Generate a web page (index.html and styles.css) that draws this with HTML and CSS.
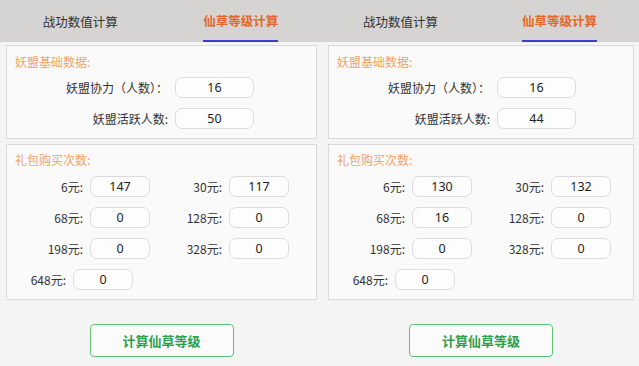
FILE: index.html
```html
<!DOCTYPE html>
<html lang="zh-CN">
<head>
  <meta charset="UTF-8">
  <meta name="viewport" content="width=device-width, initial-scale=1.0">
  <title>仙草等级计算</title>
  <link rel="stylesheet" href="styles.css">
</head>
<body>
  <div class="compare">
    <!-- first screen -->
    <div class="herb-screen">
      <div class="tab-bar">
        <div class="tab-bar__item"><span>战功数值计算</span></div>
        <div class="tab-bar__item tab-bar__item--active"><span>仙草等级计算</span></div>
      </div>
      <div class="calc-card">
        <div class="calc-card__title">妖盟基础数据:</div>
        <div class="field-row">
          <div class="field-row__label">妖盟协力（人数）：</div>
          <input class="field-input field-input--wide" type="text" value="16">
        </div>
        <div class="field-row">
          <div class="field-row__label">妖盟活跃人数:</div>
          <input class="field-input field-input--wide" type="text" value="50">
        </div>
      </div>
      <div class="calc-card calc-card--gifts">
        <div class="calc-card__title">礼包购买次数:</div>
        <div class="gift-row">
          <div class="gift-item"><div class="gift-item__label">6元:</div><input class="field-input" type="text" value="147"></div>
          <div class="gift-item"><div class="gift-item__label">30元:</div><input class="field-input" type="text" value="117"></div>
        </div>
        <div class="gift-row">
          <div class="gift-item"><div class="gift-item__label">68元:</div><input class="field-input" type="text" value="0"></div>
          <div class="gift-item"><div class="gift-item__label">128元:</div><input class="field-input" type="text" value="0"></div>
        </div>
        <div class="gift-row">
          <div class="gift-item"><div class="gift-item__label">198元:</div><input class="field-input" type="text" value="0"></div>
          <div class="gift-item"><div class="gift-item__label">328元:</div><input class="field-input" type="text" value="0"></div>
        </div>
        <div class="gift-row">
          <div class="gift-item gift-item--last"><div class="gift-item__label">648元:</div><input class="field-input" type="text" value="0"></div>
        </div>
      </div>
      <div class="calc-actions">
        <button class="calc-button">计算仙草等级</button>
      </div>
    </div>

    <!-- second screen -->
    <div class="herb-screen herb-screen--second">
      <div class="tab-bar">
        <div class="tab-bar__item"><span>战功数值计算</span></div>
        <div class="tab-bar__item tab-bar__item--active"><span>仙草等级计算</span></div>
      </div>
      <div class="calc-card">
        <div class="calc-card__title">妖盟基础数据:</div>
        <div class="field-row">
          <div class="field-row__label">妖盟协力（人数）：</div>
          <input class="field-input field-input--wide" type="text" value="16">
        </div>
        <div class="field-row">
          <div class="field-row__label">妖盟活跃人数:</div>
          <input class="field-input field-input--wide" type="text" value="44">
        </div>
      </div>
      <div class="calc-card calc-card--gifts">
        <div class="calc-card__title">礼包购买次数:</div>
        <div class="gift-row">
          <div class="gift-item"><div class="gift-item__label">6元:</div><input class="field-input" type="text" value="130"></div>
          <div class="gift-item"><div class="gift-item__label">30元:</div><input class="field-input" type="text" value="132"></div>
        </div>
        <div class="gift-row">
          <div class="gift-item"><div class="gift-item__label">68元:</div><input class="field-input" type="text" value="16"></div>
          <div class="gift-item"><div class="gift-item__label">128元:</div><input class="field-input" type="text" value="0"></div>
        </div>
        <div class="gift-row">
          <div class="gift-item"><div class="gift-item__label">198元:</div><input class="field-input" type="text" value="0"></div>
          <div class="gift-item"><div class="gift-item__label">328元:</div><input class="field-input" type="text" value="0"></div>
        </div>
        <div class="gift-row">
          <div class="gift-item gift-item--last"><div class="gift-item__label">648元:</div><input class="field-input" type="text" value="0"></div>
        </div>
      </div>
      <div class="calc-actions">
        <button class="calc-button">计算仙草等级</button>
      </div>
    </div>
  </div>
</body>
</html>
```

FILE: styles.css
```css
/* General styles */
html, body {
  margin: 0;
  padding: 0;
  background: #f4f4f4;
  font-family: "Noto Sans CJK SC", "Noto Sans", sans-serif;
  color: #333;
}

.compare {
  display: flex;
  width: 639px;
  height: 366px;
  overflow: hidden;
}

.herb-screen {
  width: 321px;
  flex: 0 0 321px;
  box-sizing: border-box;
  padding: 0 4px 0 6px;
}

.herb-screen--second {
  width: 318px;
  flex: 0 0 318px;
  padding: 0 5px 0 7px;
}

/* Tabs */
.tab-bar {
  display: flex;
  height: 42px;
  margin: 0 -4px 0 -6px;
  background: #d6d4d2;
}

.herb-screen--second .tab-bar {
  margin: 0 -5px 0 -7px;
}

.tab-bar__item {
  flex: 1;
  display: flex;
  justify-content: center;
  align-items: flex-end;
  font-size: 12.5px;
  color: #333;
}

.tab-bar__item span {
  display: block;
  height: 40px;
  line-height: 40px;
}

.tab-bar__item--active {
  color: #e4672b;
  font-weight: bold;
}

.tab-bar__item--active span {
  height: 38px;
  line-height: 38px;
  border-bottom: 2px solid #3d3dc8;
}

/* Cards */
.calc-card {
  margin-top: 3px;
  background: #fafafa;
  border: 1px solid #dadada;
  padding: 8px 8px 9px 8px;
}

.calc-card--gifts {
  margin-top: 5px;
  padding-top: 7px;
}

.calc-card__title {
  font-size: 12px;
  line-height: 16px;
  color: #f0a468;
  margin-bottom: 7px;
}

.calc-card--gifts .calc-card__title {
  margin-bottom: 8px;
}

.field-row {
  display: flex;
  align-items: center;
  gap: 7px;
}

.field-row + .field-row {
  margin-top: 10px;
}

.field-row__label {
  width: 153px;
  text-align: right;
  font-size: 12px;
  white-space: nowrap;
}

.field-input {
  box-sizing: border-box;
  width: 60px;
  height: 21px;
  border: 1px solid #dcdcdc;
  border-radius: 7px;
  background: #fdfdfd;
  outline: 0;
  text-align: center;
  font-family: "Noto Sans", sans-serif;
  font-size: 12.5px;
  color: #222;
  padding: 0;
}

.field-input--wide {
  width: 79px;
}

/* Gift grid */
.gift-row {
  display: flex;
  gap: 4px;
}

.gift-row + .gift-row {
  margin-top: 10px;
}

.gift-item {
  display: flex;
  align-items: center;
  gap: 7px;
}

.gift-item__label {
  width: 68px;
  text-align: right;
  font-size: 12px;
  white-space: nowrap;
}

.gift-item--last .gift-item__label {
  width: 51px;
}

/* Button */
.calc-actions {
  display: flex;
  justify-content: center;
  margin-top: 24px;
}

.calc-button {
  width: 144px;
  height: 33px;
  background: #fbfbfb;
  border: 1.5px solid #62c071;
  border-radius: 4px;
  color: #2f9e4c;
  font-family: "Noto Sans CJK SC", sans-serif;
  font-weight: bold;
  font-size: 13px;
  cursor: pointer;
}
```
